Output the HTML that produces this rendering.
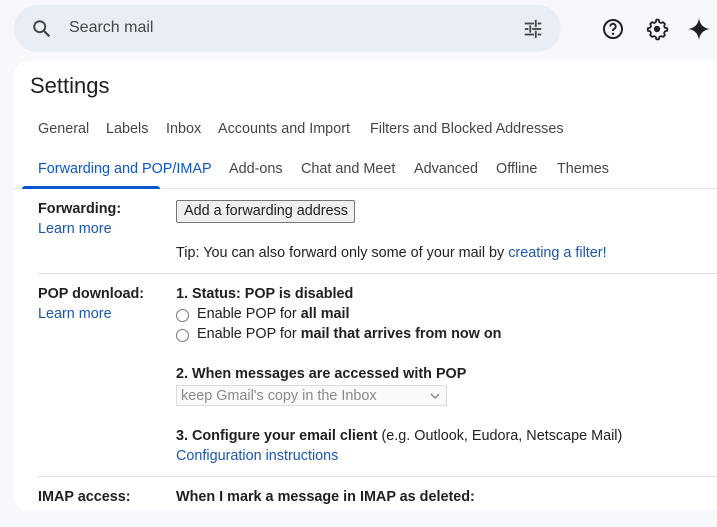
<!DOCTYPE html>
<html><head><style>
*{margin:0;padding:0;box-sizing:border-box}
body{width:717px;height:527px;background:#f6f8fc;font-family:"Liberation Sans",Arial,sans-serif;color:#202124;position:relative;overflow:hidden;font-size:14.4px}
.abs{position:absolute;white-space:nowrap}
.search{position:absolute;left:14px;top:5px;width:547px;height:47px;background:#e9eef6;border-radius:24px}
.panel{position:absolute;left:13px;top:61px;width:720px;height:449px;background:#fff;border-radius:16px 0 0 16px}
.tab{position:absolute;font-size:14.4px;color:#444746}
a{color:#1a57b3;text-decoration:none}
.b{font-weight:bold}
.sep{position:absolute;left:38px;right:0;height:1px;background:#e0e0e0}
.radio{position:absolute;width:13px;height:13px;border:1px solid #767676;border-radius:50%;left:176px}
</style></head><body>
<div class="search"></div>
<svg class="abs" style="left:31px;top:18px" width="22" height="22" viewBox="0 0 24 24"><circle cx="9.5" cy="9.5" r="6" fill="none" stroke="#444746" stroke-width="2.2"/><path d="M14 14l6 6" stroke="#444746" stroke-width="2.4"/></svg>
<div class="abs" style="left:69px;top:19px;font-size:16px;color:#444746">Search mail</div>
<svg class="abs" style="left:522px;top:18px" width="22" height="22" viewBox="0 0 24 24" fill="#444746"><rect x="3" y="5" width="10" height="2"/><rect x="17" y="5" width="4" height="2"/><rect x="14" y="2" width="2" height="8"/><rect x="3" y="11" width="4" height="2"/><rect x="11" y="11" width="10" height="2"/><rect x="8" y="8" width="2" height="8"/><rect x="3" y="17" width="10" height="2"/><rect x="17" y="17" width="4" height="2"/><rect x="14" y="14" width="2" height="8"/></svg>
<svg class="abs" style="left:601px;top:17px" width="24" height="24" viewBox="0 0 24 24"><circle cx="12" cy="12" r="9" fill="none" stroke="#202124" stroke-width="2"/><path d="M9.3 9.5a2.7 2.7 0 1 1 3.6 2.5c-.6.3-.9.8-.9 1.5v.5" fill="none" stroke="#202124" stroke-width="1.9"/><circle cx="12" cy="16.8" r="1.2" fill="#202124"/></svg>
<svg class="abs" style="left:645px;top:17px" width="24" height="24" viewBox="0 0 24 24"><path d="M12 2.5l1.8.3.5 2.3 1.6.9 2.2-.8 1.8 1.7-.8 2.3.9 1.6 2.3.5v2.5l-2.3.5-.9 1.6.8 2.3-1.8 1.7-2.2-.8-1.6.9-.5 2.3h-2.5l-.5-2.3-1.6-.9-2.2.8-1.8-1.7.8-2.3-.9-1.6-2.3-.5v-2.5l2.3-.5.9-1.6-.8-2.3 1.8-1.7 2.2.8 1.6-.9.5-2.3z" fill="none" stroke="#202124" stroke-width="1.8" stroke-linejoin="round"/><circle cx="12" cy="12" r="3.2" fill="#202124"/></svg>
<svg class="abs" style="left:687px;top:17px" width="24" height="24" viewBox="0 0 24 24"><path d="M12 1C12.8 7.5 16.5 11.2 23 12 16.5 12.8 12.8 16.5 12 23 11.2 16.5 7.5 12.8 1 12 7.5 11.2 11.2 7.5 12 1z" fill="#202124"/></svg>
<div class="panel"></div>
<div class="abs" style="left:30px;top:73px;font-size:22px;color:#1f1f1f">Settings</div>
<div class="tab" style="left:38px;top:121px">General</div>
<div class="tab" style="left:106px;top:121px">Labels</div>
<div class="tab" style="left:166px;top:121px">Inbox</div>
<div class="tab" style="left:218px;top:121px">Accounts and Import</div>
<div class="tab" style="left:370px;top:121px">Filters and Blocked Addresses</div>
<div class="tab" style="left:38px;top:161px;color:#0b57d0">Forwarding and POP/IMAP</div>
<div class="tab" style="left:229px;top:161px">Add-ons</div>
<div class="tab" style="left:301px;top:161px">Chat and Meet</div>
<div class="tab" style="left:414px;top:161px">Advanced</div>
<div class="tab" style="left:496px;top:161px">Offline</div>
<div class="tab" style="left:557px;top:161px">Themes</div>
<div class="abs" style="left:13px;right:0;top:188px;height:1px;background:#e6e6e6"></div>
<div class="abs" style="left:22px;top:186px;width:138px;height:3px;background:#0b57d0;border-radius:3px 3px 0 0"></div>

<div class="abs b" style="left:38px;top:201px">Forwarding:</div>
<div class="abs" style="left:38px;top:221px"><a>Learn more</a></div>
<div class="abs" style="left:176px;top:200px;width:179px;height:23px;border:1px solid #767676;border-radius:2px;background:#efefef;font-size:14.4px;padding:2px 0 0 7px;color:#202124">Add a forwarding address</div>
<div class="abs" style="left:176px;top:245px">Tip: You can also forward only some of your mail by <a>creating a filter!</a></div>
<div class="sep" style="top:273px"></div>

<div class="abs b" style="left:38px;top:286px">POP download:</div>
<div class="abs" style="left:38px;top:306px"><a>Learn more</a></div>
<div class="abs b" style="left:176px;top:286px">1. Status: POP is disabled</div>
<div class="radio" style="top:309px"></div>
<div class="abs" style="left:197px;top:306px">Enable POP for <span class="b">all mail</span></div>
<div class="radio" style="top:329px"></div>
<div class="abs" style="left:197px;top:326px">Enable POP for <span class="b">mail that arrives from now on</span></div>
<div class="abs b" style="left:176px;top:366px">2. When messages are accessed with POP</div>
<div class="abs" style="left:176px;top:385px;width:271px;height:21px;border:1px solid #ddd;background:#fafafa;color:#8a8a8a;padding:2px 0 0 4px">keep Gmail's copy in the Inbox
<svg style="position:absolute;right:6px;top:6px" width="10" height="8" viewBox="0 0 10 8"><path d="M1 2l4 4 4-4" fill="none" stroke="#888" stroke-width="1.5"/></svg></div>
<div class="abs" style="left:176px;top:428px"><span class="b">3. Configure your email client</span> (e.g. Outlook, Eudora, Netscape Mail)</div>
<div class="abs" style="left:176px;top:448px"><a>Configuration instructions</a></div>
<div class="sep" style="top:476px"></div>
<div class="abs b" style="left:38px;top:489px">IMAP access:</div>
<div class="abs b" style="left:176px;top:489px">When I mark a message in IMAP as deleted:</div>
</body></html>
